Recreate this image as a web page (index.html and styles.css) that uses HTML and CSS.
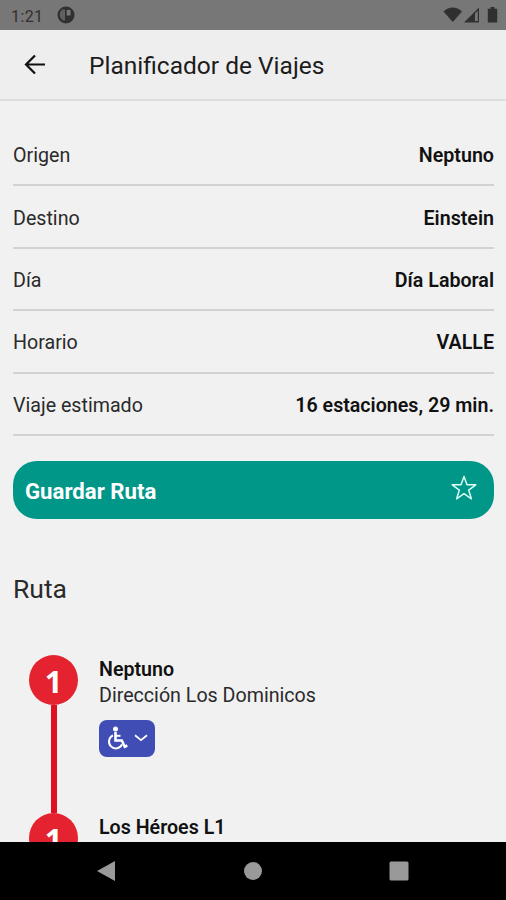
FILE: index.html
```html
<!DOCTYPE html>
<html lang="es">
<head>
    <meta charset="UTF-8">
    <meta name="viewport" content="width=device-width, initial-scale=1.0">
    <title>Planificador de Viajes</title>
    <link rel="stylesheet" href="styles.css">
</head>
<body>

<div class="status-bar">
    <span class="clock">1:21</span>
    <svg class="status-app" width="18" height="18" viewBox="0 0 18 18">
        <circle cx="9" cy="9" r="8.5" fill="#303030"/>
        <path d="M5 3.500h3v11H6.300C4 13 2.800 11 2.800 9s.7-4 2.200-5.500z" fill="#606060"/>
        <path d="M9.700 4h3.800v5.500H9.700z" fill="#777"/>
    </svg>
    <svg class="status-icons" width="56" height="18" viewBox="0 0 56 18">
        <path d="M0.500 5.500C6 0.300 13.500 0.300 19 5.500L9.800 16z" fill="#303030"/>
        <path d="M36 1.500V16.500H21z" fill="#303030"/>
        <path d="M32 7.500l2.800-2.800V15H32z" fill="#777"/>
        <path d="M47.500 1h4v1.700h2.700v13.800h-9.400V2.700h2.700z" fill="#303030"/>
    </svg>
</div>

<header class="header">
    <svg class="back" width="22" height="22" viewBox="0 0 22 22" fill="none" stroke="#111" stroke-width="2.200">
        <path d="M21 10.500H2.500M11 1.500l-9 9 9 9"/>
    </svg>
    <h1>Planificador de Viajes</h1>
</header>

<main class="content">
    <div class="details">
        <div class="row"><span>Origen</span><strong>Neptuno</strong></div>
        <div class="row"><span>Destino</span><strong>Einstein</strong></div>
        <div class="row"><span>Día</span><strong>Día Laboral</strong></div>
        <div class="row"><span>Horario</span><strong>VALLE</strong></div>
        <div class="row"><span>Viaje estimado</span><strong>16 estaciones, 29 min.</strong></div>
    </div>

    <button class="save">
        <span>Guardar Ruta</span>
        <svg width="26" height="26" viewBox="0 0 26 26" fill="none" stroke="#d9fff7" stroke-width="1.500" stroke-linejoin="round">
            <path d="M13 1.500l3 8.300h8.800l-7.100 5.300 2.700 8.700-7.400-5.200-7.400 5.200 2.700-8.700L1.200 9.800H10z"/>
        </svg>
    </button>

    <h2>Ruta</h2>

    <div class="stop">
        <div class="track">
            <div class="line-number">1</div>
            <div class="rail"></div>
        </div>
        <div class="stop-info">
            <strong>Neptuno</strong>
            <span>Dirección Los Dominicos</span>
            <button class="access">
                <svg width="22" height="24" viewBox="0 0 22 24" fill="none" stroke="#fff" stroke-width="2">
                    <circle cx="8.500" cy="3" r="2.500" fill="#fff" stroke="none"/>
                    <path d="M8.500 6v8.500h6.300l3 6.200 2.500-1.200" stroke-width="2.600"/>
                    <path d="M9 9.800h4.500"/>
                    <path d="M6 9.400a6.800 6.800 0 1 0 9 9"/>
                </svg>
                <svg width="14" height="8" viewBox="0 0 14 8" fill="none" stroke="#fff" stroke-width="1.800">
                    <path d="M1 1.200l6 5 6-5"/>
                </svg>
            </button>
        </div>
    </div>
    <div class="stop">
        <div class="track">
            <div class="line-number">1</div>
            <div class="rail"></div>
        </div>
        <div class="stop-info">
            <strong>Los Héroes L1</strong>
        </div>
    </div>
</main>

<nav class="nav-bar">
    <svg width="20" height="22" viewBox="0 0 20 22"><path d="M1 11L19 1v20z" fill="#999"/></svg>
    <svg width="20" height="22" viewBox="0 0 20 22"><circle cx="10" cy="11" r="9" fill="#999"/></svg>
    <svg width="20" height="22" viewBox="0 0 20 22"><rect x="0.500" y="1.500" width="19" height="19" rx="1.500" fill="#999"/></svg>
</nav>

</body>
</html>
```
FILE: styles.css
```css
body {
    margin: 0;
    height: 900px;
    display: flex;
    flex-direction: column;
    overflow: hidden;
    background-color: #f1f1f1;
    color: #2a2a2a;
    font-family: Roboto, sans-serif;
}
.status-bar {
    flex: none;
    height: 30px;
    box-sizing: border-box;
    padding: 0 7px 0 11px;
    display: flex;
    align-items: center;
    background-color: #777;
    color: #303030;
}
.clock {
    font-size: 16px;
    letter-spacing: 0.4px;
    padding-top: 2px;
}
.status-app {
    margin-left: 14px;
}
.status-icons {
    margin-left: auto;
}
.header {
    flex: none;
    height: 71px;
    box-sizing: border-box;
    padding-left: 24px;
    display: flex;
    align-items: center;
    background-color: #eee;
    border-bottom: 2px solid #dedede;
}
.header h1 {
    margin: 2px 0 0 43px;
    font-size: 24.500px;
    font-weight: 400;
    color: #1c1c1c;
}
.content {
    flex: 1;
    min-height: 0;
    overflow: hidden;
    padding: 23px 12px 0 13px;
}
.row {
    height: 62.400px;
    box-sizing: border-box;
    padding-top: 3px;
    display: flex;
    justify-content: space-between;
    align-items: center;
    border-bottom: 2px solid #d2d2d2;
    font-size: 19.650px;
}
.row strong {
    font-weight: 600;
    color: #111;
}
.save {
    width: 100%;
    height: 58px;
    margin-top: 25px;
    padding: 2px 17px 0 12px;
    display: flex;
    justify-content: space-between;
    align-items: center;
    border: none;
    border-radius: 24px;
    background-color: #009688;
    color: #fff;
    font-family: inherit;
    font-size: 22.200px;
    font-weight: 700;
}
.save svg {
    margin-bottom: 5px;
}
.content h2 {
    margin: 54px 0 50px;
    font-size: 26.500px;
    line-height: 32px;
    font-weight: 400;
}
.stop {
    height: 158px;
    padding-left: 16px;
    display: flex;
    gap: 21px;
}
.track {
    width: 49px;
    display: flex;
    flex-direction: column;
    align-items: center;
}
.line-number {
    width: 49px;
    height: 50px;
    line-height: 52px;
    border-radius: 50%;
    background-color: #e52330;
    color: #fff;
    text-align: center;
    font-family: "Noto Sans", sans-serif;
    font-size: 31px;
    font-weight: 700;
}
.rail {
    flex: 1;
    width: 6px;
    background-color: #e01020;
}
.stop-info {
    display: flex;
    flex-direction: column;
    align-items: flex-start;
    font-size: 19.650px;
    line-height: 26px;
    padding-top: 2px;
}
.stop-info strong {
    font-weight: 600;
    color: #111;
}
.access {
    width: 56px;
    height: 37px;
    margin-top: 11px;
    padding: 0 7px 0 8px;
    display: flex;
    justify-content: space-between;
    align-items: center;
    border: none;
    border-radius: 8px;
    background-color: #3f4db5;
}
.nav-bar {
    flex: none;
    height: 58px;
    box-sizing: border-box;
    padding: 0 97px 0 96px;
    display: flex;
    justify-content: space-between;
    align-items: center;
    background-color: #000;
}
```
